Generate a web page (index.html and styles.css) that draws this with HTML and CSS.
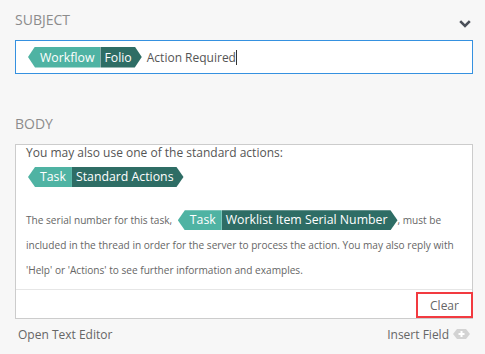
FILE: index.html
```html
<!DOCTYPE html>
<html lang="en">
<head>
    <meta charset="UTF-8">
    <title>Action Email</title>
    <link rel="stylesheet" href="styles.css">
</head>
<body>
    <div class="field-header">
        <span class="field-label">Subject</span>
        <svg class="collapse" width="12" height="8" viewBox="0 0 12 8">
            <path d="M1.2 1.2 L6 6 L10.8 1.2" fill="none" stroke="#4a4f58" stroke-width="2.6"/>
        </svg>
    </div>

    <div class="subject-input">
        <span class="tag">
            <span class="tag-type">Workflow</span><span class="tag-name">Folio</span>
        </span>
        <span class="subject-text">Action Required</span><span class="caret"></span>
    </div>

    <div class="field-header body-header">
        <span class="field-label">Body</span>
    </div>

    <div class="body-box">
        <div class="body-content">
            <div class="intro">You may also use one of the standard actions:</div>
            <div class="tag-line">
                <span class="tag">
                    <span class="tag-type">Task</span><span class="tag-name">Standard Actions</span>
                </span>
            </div>
            <p class="note">
                <span>The serial number for this task,</span>
                <span class="tag inline-tag"><span class="tag-type">Task</span><span class="tag-name">Worklist Item Serial Number</span></span><span>, must be</span>
                <span>included in the thread in order for the server to process the action. You may also reply with</span>
                <span>'Help' or 'Actions' to see further information and examples.</span>
            </p>
        </div>
        <div class="body-footer">
            <button class="clear-btn">Clear</button>
        </div>
    </div>

    <div class="editor-links">
        <span>Open Text Editor</span>
        <span class="insert-field">
            Insert Field
            <svg width="17" height="10" viewBox="0 0 17 10">
                <path d="M4 0 H13 L17 5 L13 10 H4 L0 5 Z" fill="#d3d3d3"/>
                <path d="M8.5 2 V8 M5.5 5 H11.5" stroke="#fff" stroke-width="2"/>
            </svg>
        </span>
    </div>
</body>
</html>
```

FILE: styles.css
```css
body {
    margin: 0;
    background-color: #f7f7f7;
    font-family: "Open Sans", Arial, sans-serif;
    color: #555;
}

.field-header {
    display: flex;
    justify-content: space-between;
    align-items: center;
    margin: 10px 14px 0 15px;
    height: 20px;
    line-height: 20px;
}

.field-label {
    font-size: 14px;
    text-transform: uppercase;
    color: #8c8c8c;
}

.collapse {
    margin-top: 7px;
}

.body-header {
    margin-top: 40px;
}

.subject-input {
    display: flex;
    align-items: center;
    height: 32px;
    margin: 10px 12px 0 15px;
    padding-left: 12px;
    background: #fff;
    border: 1px solid #3591e0;
    font-size: 12px;
}

.subject-text {
    margin-left: 5px;
    color: #555;
}

.caret {
    display: inline-block;
    width: 1px;
    height: 15px;
    background: #333;
}

/* etiquetas de campo */
.tag {
    display: inline-flex;
    height: 21px;
    line-height: 21px;
    font-size: 12.3px;
    color: #fff;
    white-space: nowrap;
}

.tag-type {
    background: #4fb3a3;
    padding: 0 6px 0 12px;
    clip-path: polygon(7px 0, 100% 0, 100% 100%, 7px 100%, 0 50%);
}

.tag-name {
    background: #2e6d65;
    padding: 0 10px 0 4px;
    clip-path: polygon(0 0, calc(100% - 7px) 0, 100% 50%, calc(100% - 7px) 100%, 0 100%);
}

.body-box {
    margin: 10px 12px 0 15px;
    background: #fff;
    border: 1px solid #ccc;
}

.body-content {
    height: 144px;
    padding: 0 10px;
    overflow: hidden;
}

.intro {
    font-size: 12px;
    line-height: 16px;
}

.tag-line {
    margin-top: 3px;
    padding-left: 2px;
}

.tag-line .tag {
    height: 20px;
    line-height: 20px;
}

.note {
    margin: 21px 0 0;
    font-size: 10.1px;
    line-height: 25px;
    color: #666;
}

.inline-tag {
    height: 20px;
    line-height: 20px;
    vertical-align: middle;
    margin: 0 0 2px 3px;
}

.body-footer {
    display: flex;
    justify-content: flex-end;
    height: 28px;
    border-top: 1px solid #e6e6e6;
}

.clear-btn {
    width: 57px;
    height: 26px;
    margin: 2px -1px 0 0;
    background: #fff;
    border: 2px solid #f23a40;
    font-family: "Open Sans", Arial, sans-serif;
    font-size: 12px;
    color: #666;
}

.editor-links {
    display: flex;
    justify-content: space-between;
    align-items: center;
    margin: 6px 15px 0 18px;
    height: 18px;
    font-size: 12px;
    color: #666;
}

.insert-field {
    display: flex;
    align-items: center;
    gap: 4px;
}
```
